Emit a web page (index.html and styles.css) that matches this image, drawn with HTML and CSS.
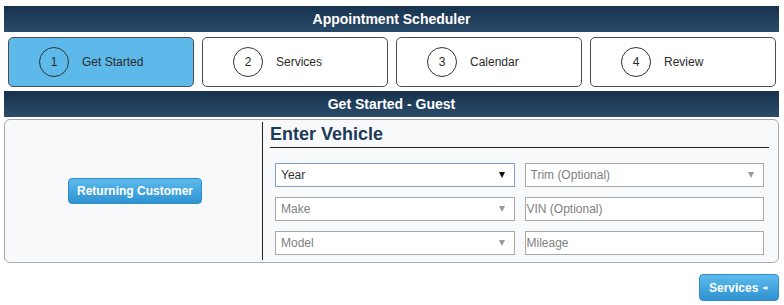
FILE: index.html
```html
<!DOCTYPE html>
<html>
<head>
<meta charset="utf-8">
<link rel="stylesheet" href="styles.css">
</head>
<body>
<div class="page">
  <div class="bar">Appointment Scheduler</div>
  <div class="steps">
    <div class="step active"><span class="num">1</span><span class="label">Get Started</span></div>
    <div class="step"><span class="num">2</span><span class="label">Services</span></div>
    <div class="step"><span class="num">3</span><span class="label">Calendar</span></div>
    <div class="step"><span class="num">4</span><span class="label">Review</span></div>
  </div>
  <div class="bar bar2">Get Started - Guest</div>
  <div class="panel">
    <div class="left">
      <button class="btn">Returning Customer</button>
    </div>
    <div class="right">
      <h2 class="title">Enter Vehicle</h2>
      <div class="fields">
        <div class="field select focus"><span>Year</span><i class="caret dark"></i></div>
        <div class="field select muted"><span>Trim (Optional)</span><i class="caret"></i></div>
        <div class="field select muted"><span>Make</span><i class="caret"></i></div>
        <div class="field input muted"><span>VIN (Optional)</span></div>
        <div class="field select muted"><span>Model</span><i class="caret"></i></div>
        <div class="field input muted"><span>Mileage</span></div>
      </div>
    </div>
  </div>
  <div class="footer">
    <button class="btn next">Services <svg class="arrow" width="10" height="10" viewBox="0 0 10 10"><path d="M0.5 3.4H5V0.8L9.6 5 5 9.2V6.6H0.5Z" fill="#fff"/></svg></button>
  </div>
</div>
</body>
</html>
```

FILE: styles.css
```css
* { box-sizing: border-box; }
body {
  margin: 0;
  background: #fff;
  font-family: "Liberation Sans", Arial, sans-serif;
}
.page {
  padding: 6px 5px 0 4px;
}
.bar {
  height: 26px;
  background: linear-gradient(#17324d, #2a4b6a);
  color: #fff;
  font-weight: bold;
  font-size: 14px;
  display: flex;
  align-items: center;
  justify-content: center;
}
.steps {
  display: flex;
  gap: 8px;
  margin-top: 5px;
  padding: 0 3px 0 4px;
}
.step {
  width: 186px;
  height: 50px;
  border: 1px solid #4c4c4c;
  border-radius: 5px;
  background: #fff;
  display: flex;
  align-items: center;
  padding-left: 30px;
  color: #2b2b2b;
  font-size: 12px;
}
.step.active {
  background: #5db9e9;
}
.num {
  width: 30px;
  height: 30px;
  border: 1px solid #333;
  border-radius: 50%;
  display: flex;
  align-items: center;
  justify-content: center;
  margin-right: 14px;
}
.label { margin-left: -1px; }
.bar2 {
  margin-top: 4px;
}
.panel {
  margin-top: 2px;
  height: 144px;
  border: 1px solid #a9a9a9;
  border-radius: 6px;
  background: #f7f9fb;
  display: flex;
}
.left {
  width: 258px;
  margin: 2px 0;
  border-right: 1px solid #222;
  display: flex;
  align-items: center;
  justify-content: center;
  padding-left: 3px;
}
.btn {
  font-family: "Liberation Sans", Arial, sans-serif;
  font-weight: bold;
  font-size: 12px;
  color: #fff;
  height: 26px;
  padding: 0 8px;
  border: 1px solid #2f8ccb;
  border-radius: 4px;
  background: linear-gradient(#5dbaec, #2f93d1);
  display: inline-flex;
  align-items: center;
}
.right {
  flex: 1;
  padding: 3px 9px 0 7px;
}
.title {
  margin: 0;
  font-size: 18px;
  line-height: 22px;
  font-weight: bold;
  color: #1f3a57;
  padding-bottom: 2px;
  border-bottom: 1px solid #222;
}
.fields {
  margin: 15px 5px 0 5px;
  display: grid;
  grid-template-columns: 1fr 1fr;
  column-gap: 10px;
  row-gap: 10px;
}
.field {
  height: 24px;
  background: #fff;
  border: 1px solid #a9a9a9;
  font-size: 12px;
  display: flex;
  align-items: center;
  color: #333;
}
.field.select { padding: 0 9px 0 5px; justify-content: space-between; }
.field.input { padding: 0 2px 0 1px; }
.field.focus { border-color: #7f9ed0; }
.field.muted { color: #808080; }
.caret {
  width: 0;
  height: 0;
  border-left: 3px solid transparent;
  border-right: 3px solid transparent;
  border-top: 6px solid #9a9a9a;
}
.caret.dark { border-top-color: #111; }
.footer {
  margin-top: 11px;
  display: flex;
  justify-content: flex-end;
}
.btn.next {
  height: 27px;
  padding: 0 9px 0 9px;
  gap: 5px;
  width: 80px;
}
.arrow { display: block; }
```
